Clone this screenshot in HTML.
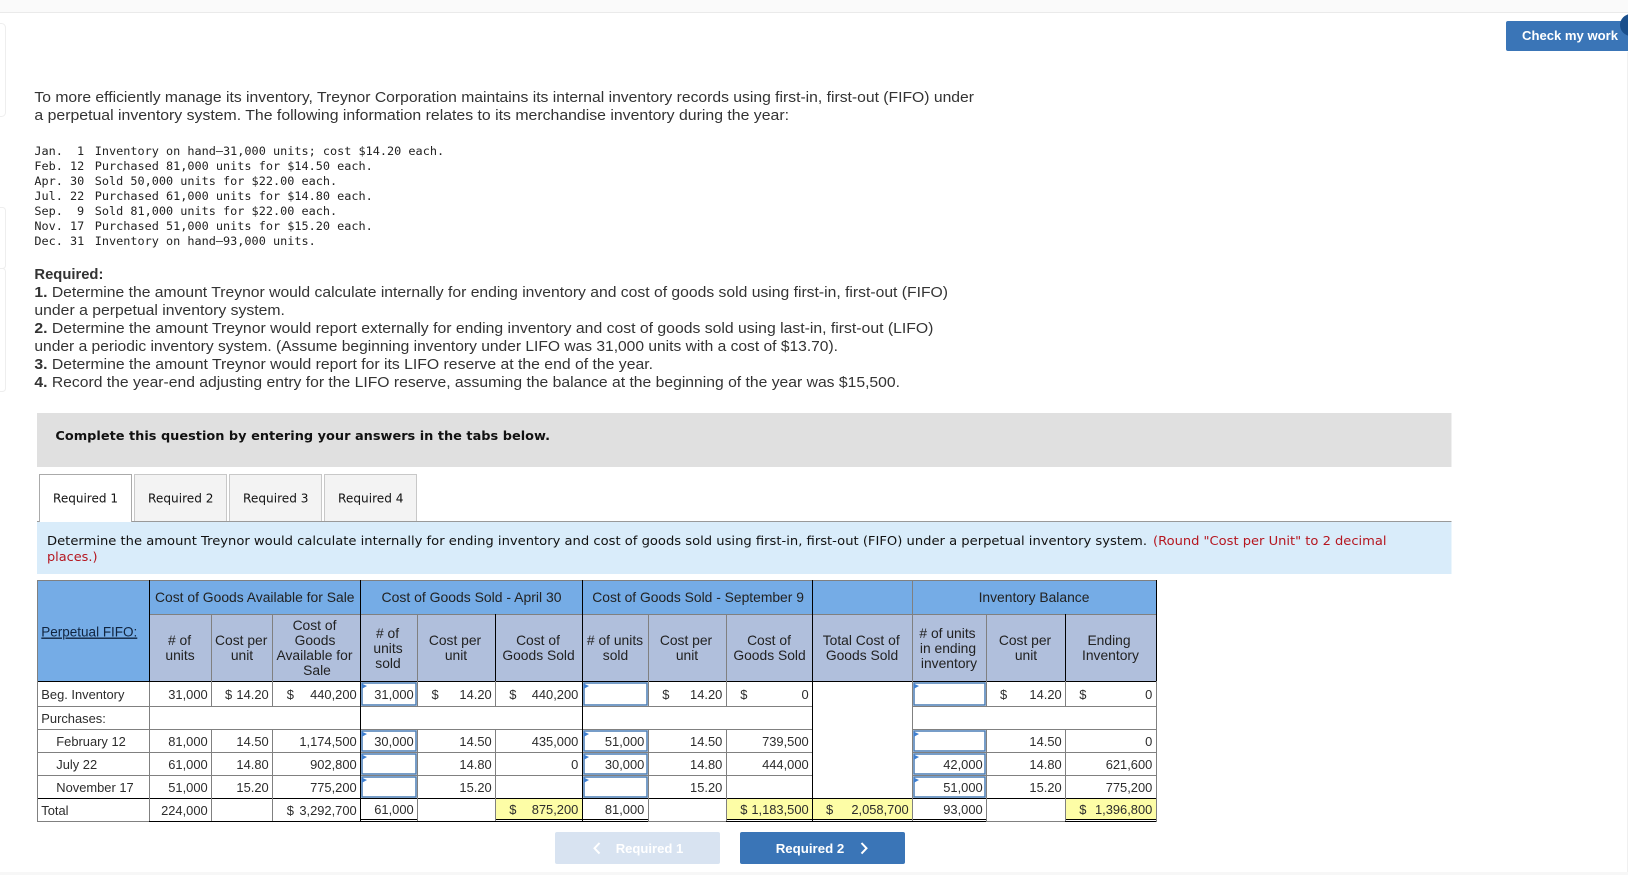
<!DOCTYPE html>
<html lang="en">
<head>
<meta charset="utf-8">
<title>Treynor Corporation</title>
<style>
html,body{margin:0;padding:0;background:#fff;width:1628px;height:875px;overflow:hidden}
svg{display:block;position:absolute;left:0;top:0}
.p{font:15px "Liberation Sans",Arial,sans-serif;fill:#333}
.m{font:11.85px "DejaVu Sans Mono","Liberation Mono",monospace;fill:#222}
.v{font:12px "DejaVu Sans",Verdana,sans-serif;fill:#111}
.h{font:13.85px "Liberation Sans",Arial,sans-serif;fill:#222;text-anchor:middle}
.hl{font:13.85px "Liberation Sans",Arial,sans-serif;fill:#222}
.b{font:12.9px "Liberation Sans",Arial,sans-serif;fill:#2c2c2c}
.r{font:12.9px "Liberation Sans",Arial,sans-serif;fill:#2c2c2c;text-anchor:end}
.g{fill:#808080}.k{fill:#000}
.in{fill:#fff;stroke:#4a7db6;stroke-width:1.5}
.fl{fill:#3f7fd0}
</style>
</head>
<body>
<svg width="1628" height="875" viewBox="0 0 1628 875" xmlns="http://www.w3.org/2000/svg">
<!-- chrome -->
<rect x="0" y="0" width="1628" height="12" fill="#fafafa"/>
<rect x="0" y="12" width="1628" height="1" fill="#eaeaea"/>
<rect x="0" y="872" width="1628" height="3" fill="#f7f7f7"/>
<rect x="-10" y="23.5" width="15.5" height="93" rx="4" fill="#fff" stroke="#eee"/>
<rect x="-10" y="207.5" width="15.5" height="61" rx="3" fill="#fff" stroke="#eee"/>
<rect x="-10" y="268.5" width="15.5" height="123" rx="3" fill="#fff" stroke="#eee"/>
<rect x="1627" y="52" width="1" height="820" fill="#f0f0f0"/>
<!-- check my work -->
<rect x="1506" y="21" width="130" height="30" rx="2" fill="#3a75b7"/>
<circle cx="1631" cy="25" r="11" fill="#1a4f8c"/>
<text x="1522" y="40" textLength="96" lengthAdjust="spacingAndGlyphs" style="font:bold 13.2px 'Liberation Sans',Arial,sans-serif;fill:#fff">Check my work</text>

<!-- prose -->
<text class="p" x="34.4" y="102" textLength="939.6" lengthAdjust="spacingAndGlyphs">To more efficiently manage its inventory, Treynor Corporation maintains its internal inventory records using first-in, first-out (FIFO) under</text>
<text class="p" x="34.4" y="120" textLength="754.6" lengthAdjust="spacingAndGlyphs">a perpetual inventory system. The following information relates to its merchandise inventory during the year:</text>

<text class="m" x="34.4" y="155">Jan.</text><text class="m" x="77" y="155">1</text><text class="m" x="94.7" y="155">Inventory on hand—31,000 units; cost $14.20 each.</text>
<text class="m" x="34.4" y="170">Feb.</text><text class="m" x="70" y="170">12</text><text class="m" x="94.7" y="170">Purchased 81,000 units for $14.50 each.</text>
<text class="m" x="34.4" y="185">Apr.</text><text class="m" x="70" y="185">30</text><text class="m" x="94.7" y="185">Sold 50,000 units for $22.00 each.</text>
<text class="m" x="34.4" y="200">Jul.</text><text class="m" x="70" y="200">22</text><text class="m" x="94.7" y="200">Purchased 61,000 units for $14.80 each.</text>
<text class="m" x="34.4" y="215">Sep.</text><text class="m" x="77" y="215">9</text><text class="m" x="94.7" y="215">Sold 81,000 units for $22.00 each.</text>
<text class="m" x="34.4" y="230">Nov.</text><text class="m" x="70" y="230">17</text><text class="m" x="94.7" y="230">Purchased 51,000 units for $15.20 each.</text>
<text class="m" x="34.4" y="245">Dec.</text><text class="m" x="70" y="245">31</text><text class="m" x="94.7" y="245">Inventory on hand—93,000 units.</text>

<text class="p" x="34.4" y="279" style="font-weight:bold" textLength="69" lengthAdjust="spacingAndGlyphs">Required:</text>
<text class="p" x="34.4" y="297" textLength="913.6" lengthAdjust="spacingAndGlyphs"><tspan font-weight="bold">1.</tspan> Determine the amount Treynor would calculate internally for ending inventory and cost of goods sold using first-in, first-out (FIFO)</text>
<text class="p" x="34.4" y="315" textLength="250.5" lengthAdjust="spacingAndGlyphs">under a perpetual inventory system.</text>
<text class="p" x="34.4" y="333" textLength="899" lengthAdjust="spacingAndGlyphs"><tspan font-weight="bold">2.</tspan> Determine the amount Treynor would report externally for ending inventory and cost of goods sold using last-in, first-out (LIFO)</text>
<text class="p" x="34.4" y="351" textLength="803.6" lengthAdjust="spacingAndGlyphs">under a periodic inventory system. (Assume beginning inventory under LIFO was 31,000 units with a cost of $13.70).</text>
<text class="p" x="34.4" y="369" textLength="618.6" lengthAdjust="spacingAndGlyphs"><tspan font-weight="bold">3.</tspan> Determine the amount Treynor would report for its LIFO reserve at the end of the year.</text>
<text class="p" x="34.4" y="387" textLength="865.6" lengthAdjust="spacingAndGlyphs"><tspan font-weight="bold">4.</tspan> Record the year-end adjusting entry for the LIFO reserve, assuming the balance at the beginning of the year was $15,500.</text>

<!-- grey box -->
<rect x="37" y="413" width="1414.5" height="54" fill="#e0e0e0"/>
<text x="55.4" y="440" textLength="494.6" lengthAdjust="spacingAndGlyphs" style="font:bold 12.5px 'DejaVu Sans',Verdana,sans-serif;fill:#111">Complete this question by entering your answers in the tabs below.</text>

<!-- tabs -->
<rect x="134.5" y="474.5" width="92" height="47" fill="#f3f3f3" stroke="#c8c8c8"/>
<rect x="229.5" y="474.5" width="92" height="47" fill="#f3f3f3" stroke="#c8c8c8"/>
<rect x="324.5" y="474.5" width="92" height="47" fill="#f3f3f3" stroke="#c8c8c8"/>
<rect x="37" y="521" width="1414.5" height="1" fill="#999"/>
<rect x="39.5" y="474.5" width="92" height="48" fill="#fff" stroke="#aaa"/>
<text class="v" x="53" y="502.5" textLength="65" lengthAdjust="spacingAndGlyphs">Required 1</text>
<text class="v" x="148" y="502.5" textLength="65.5" lengthAdjust="spacingAndGlyphs">Required 2</text>
<text class="v" x="243" y="502.5" textLength="65.5" lengthAdjust="spacingAndGlyphs">Required 3</text>
<text class="v" x="338" y="502.5" textLength="65.5" lengthAdjust="spacingAndGlyphs">Required 4</text>

<!-- instruction box -->
<rect x="37" y="522" width="1414.5" height="52" fill="#d9ecfa"/>
<text class="v" x="47" y="545" textLength="1100" lengthAdjust="spacingAndGlyphs">Determine the amount Treynor would calculate internally for ending inventory and cost of goods sold using first-in, first-out (FIFO) under a perpetual inventory system.</text>
<text class="v" x="1153" y="545" textLength="233.5" lengthAdjust="spacingAndGlyphs" style="fill:#b5161f">(Round "Cost per Unit" to 2 decimal</text>
<text class="v" x="47" y="561" textLength="50.5" lengthAdjust="spacingAndGlyphs" style="fill:#b5161f">places.)</text>

<!-- table fills -->
<rect x="37" y="580" width="1120" height="34" fill="#75ace6"/>
<rect x="37" y="614" width="113" height="67" fill="#75ace6"/>
<rect x="150" y="614" width="1007" height="67" fill="#b0bfdc"/>
<rect x="495" y="799" width="88" height="20" fill="#fdfda6"/>
<rect x="726" y="799" width="187" height="20" fill="#fdfda6"/>
<rect x="1065" y="799" width="92" height="20" fill="#fdfda6"/>

<!-- horizontals -->
<rect class="g" x="37" y="580" width="1120" height="1"/>
<rect class="g" x="149" y="614" width="1008" height="1"/>
<rect class="k" x="37" y="681" width="1120" height="1"/>
<rect class="g" x="37" y="706" width="776" height="1"/><rect class="g" x="912" y="706" width="245" height="1"/>
<rect class="g" x="37" y="729" width="776" height="1"/><rect class="g" x="912" y="729" width="245" height="1"/>
<rect class="g" x="37" y="752" width="776" height="1"/><rect class="g" x="912" y="752" width="245" height="1"/>
<rect class="g" x="37" y="775" width="776" height="1"/><rect class="g" x="912" y="775" width="245" height="1"/>
<rect class="k" x="37" y="798" width="1120" height="1"/>
<rect class="g" x="37" y="821" width="112" height="1"/>
<rect class="k" x="149" y="821" width="499" height="1"/>
<rect class="g" x="648" y="821" width="78" height="1"/>
<rect class="k" x="726" y="821" width="260" height="1"/>
<rect class="g" x="986" y="821" width="79" height="1"/>
<rect class="k" x="1065" y="821" width="92" height="1"/>
<rect class="k" x="360" y="819" width="57" height="1"/>
<rect class="k" x="495" y="819" width="153" height="1"/>
<rect class="k" x="726" y="819" width="260" height="1"/>
<rect class="k" x="1065" y="819" width="92" height="1"/>

<!-- verticals -->
<rect class="g" x="37" y="580" width="1" height="242"/>
<rect class="k" x="149" y="580" width="1" height="102"/><rect class="g" x="149" y="682" width="1" height="139"/>
<rect class="g" x="211" y="614" width="1" height="92"/><rect class="g" x="211" y="729" width="1" height="92"/>
<rect class="g" x="272" y="614" width="1" height="92"/><rect class="g" x="272" y="729" width="1" height="92"/>
<rect class="k" x="360" y="580" width="1" height="241"/>
<rect class="g" x="417" y="614" width="1" height="92"/><rect class="g" x="417" y="729" width="1" height="92"/>
<rect class="k" x="495" y="614" width="1" height="67"/><rect class="g" x="495" y="681" width="1" height="25"/><rect class="g" x="495" y="729" width="1" height="92"/>
<rect class="k" x="582" y="580" width="1" height="241"/>
<rect class="g" x="648" y="614" width="1" height="92"/><rect class="g" x="648" y="729" width="1" height="92"/>
<rect class="g" x="726" y="614" width="1" height="92"/><rect class="g" x="726" y="729" width="1" height="92"/>
<rect class="k" x="812" y="580" width="1" height="241"/>
<rect class="g" x="912" y="580" width="1" height="241"/>
<rect class="g" x="986" y="614" width="1" height="92"/><rect class="g" x="986" y="729" width="1" height="92"/>
<rect class="k" x="1065" y="614" width="1" height="67"/><rect class="g" x="1065" y="681" width="1" height="25"/><rect class="g" x="1065" y="729" width="1" height="92"/>
<rect class="k" x="1156" y="580" width="1" height="101"/><rect class="g" x="1156" y="681" width="1" height="141"/>

<!-- inputs -->
<rect class="in" x="362" y="683" width="54" height="22"/><polygon class="fl" points="361.5,683.5 367,686 361.5,689"/>
<rect class="in" x="362" y="731" width="54" height="20"/><polygon class="fl" points="361.5,731.5 367,734 361.5,737"/>
<rect class="in" x="362" y="754" width="54" height="20"/><polygon class="fl" points="361.5,754.5 367,757 361.5,760"/>
<rect class="in" x="362" y="777" width="54" height="20"/><polygon class="fl" points="361.5,777.5 367,780 361.5,783"/>
<rect class="in" x="584" y="683" width="63" height="22"/><polygon class="fl" points="583.5,683.5 589,686 583.5,689"/>
<rect class="in" x="584" y="731" width="63" height="20"/><polygon class="fl" points="583.5,731.5 589,734 583.5,737"/>
<rect class="in" x="584" y="754" width="63" height="20"/><polygon class="fl" points="583.5,754.5 589,757 583.5,760"/>
<rect class="in" x="584" y="777" width="63" height="20"/><polygon class="fl" points="583.5,777.5 589,780 583.5,783"/>
<rect class="in" x="914" y="683" width="71" height="22"/><polygon class="fl" points="913.5,683.5 919,686 913.5,689"/>
<rect class="in" x="914" y="731" width="71" height="20"/><polygon class="fl" points="913.5,731.5 919,734 913.5,737"/>
<rect class="in" x="914" y="754" width="71" height="20"/><polygon class="fl" points="913.5,754.5 919,757 913.5,760"/>
<rect class="in" x="914" y="777" width="71" height="20"/><polygon class="fl" points="913.5,777.5 919,780 913.5,783"/>

<!-- header text -->
<text class="hl" x="155" y="602" textLength="199.5" lengthAdjust="spacingAndGlyphs">Cost of Goods Available for Sale</text>
<text class="hl" x="381.5" y="602" textLength="180" lengthAdjust="spacingAndGlyphs">Cost of Goods Sold - April 30</text>
<text class="hl" x="592.3" y="602">Cost of Goods Sold - September 9</text>
<text class="h" x="1034" y="602">Inventory Balance</text>
<text class="hl" x="41.3" y="636.5" text-decoration="underline" style="fill:#10243f" textLength="96" lengthAdjust="spacingAndGlyphs">Perpetual FIFO:</text>

<text class="h" x="179.5" y="645"># of</text><text class="h" x="180" y="660">units</text>
<text class="h" x="241.2" y="645">Cost per</text><text class="h" x="242" y="660">unit</text>
<text class="h" x="314.5" y="630">Cost of</text><text class="h" x="315" y="645">Goods</text><text class="h" x="314.5" y="660">Available for</text><text class="h" x="317" y="675">Sale</text>
<text class="h" x="387.5" y="638"># of</text><text class="h" x="388" y="653">units</text><text class="h" x="388" y="668">sold</text>
<text class="h" x="455" y="645">Cost per</text><text class="h" x="456" y="660">unit</text>
<text class="h" x="538" y="645">Cost of</text><text class="h" x="538.5" y="660">Goods Sold</text>
<text class="h" x="615" y="645"># of units</text><text class="h" x="615.5" y="660">sold</text>
<text class="h" x="686" y="645">Cost per</text><text class="h" x="687" y="660">unit</text>
<text class="h" x="769" y="645">Cost of</text><text class="h" x="769.5" y="660">Goods Sold</text>
<text class="h" x="861.2" y="645">Total Cost of</text><text class="h" x="862" y="660">Goods Sold</text>
<text class="h" x="947.5" y="638"># of units</text><text class="h" x="948" y="653">in ending</text><text class="h" x="949" y="668">inventory</text>
<text class="h" x="1025" y="645">Cost per</text><text class="h" x="1026" y="660">unit</text>
<text class="h" x="1109" y="645">Ending</text><text class="h" x="1110.5" y="660">Inventory</text>

<!-- row labels -->
<text class="b" x="41.3" y="699">Beg. Inventory</text>
<text class="b" x="41.3" y="723">Purchases:</text>
<text class="b" x="56.3" y="746">February 12</text>
<text class="b" x="56.3" y="769">July 22</text>
<text class="b" x="56.3" y="792">November 17</text>
<text class="b" x="41.3" y="815">Total</text>

<!-- row 1 -->
<text class="r" x="207.7" y="699">31,000</text>
<text class="b" x="225" y="699">$</text><text class="r" x="268.7" y="699">14.20</text>
<text class="b" x="286.7" y="699">$</text><text class="r" x="356.7" y="699">440,200</text>
<text class="r" x="413.7" y="699">31,000</text>
<text class="b" x="431.5" y="699">$</text><text class="r" x="491.7" y="699">14.20</text>
<text class="b" x="509.3" y="699">$</text><text class="r" x="578.3" y="699">440,200</text>
<text class="b" x="662.3" y="699">$</text><text class="r" x="722.3" y="699">14.20</text>
<text class="b" x="740.3" y="699">$</text><text class="r" x="808.7" y="699">0</text>
<text class="b" x="1000" y="699">$</text><text class="r" x="1061.7" y="699">14.20</text>
<text class="b" x="1079.3" y="699">$</text><text class="r" x="1152.3" y="699">0</text>

<!-- Feb -->
<text class="r" x="207.7" y="746">81,000</text><text class="r" x="268.7" y="746">14.50</text><text class="r" x="356.7" y="746">1,174,500</text>
<text class="r" x="413.7" y="746">30,000</text><text class="r" x="491.7" y="746">14.50</text><text class="r" x="578.3" y="746">435,000</text>
<text class="r" x="644.3" y="746">51,000</text><text class="r" x="722.3" y="746">14.50</text><text class="r" x="808.7" y="746">739,500</text>
<text class="r" x="1061.7" y="746">14.50</text><text class="r" x="1152.3" y="746">0</text>
<!-- Jul -->
<text class="r" x="207.7" y="769">61,000</text><text class="r" x="268.7" y="769">14.80</text><text class="r" x="356.7" y="769">902,800</text>
<text class="r" x="491.7" y="769">14.80</text><text class="r" x="578.3" y="769">0</text>
<text class="r" x="644.3" y="769">30,000</text><text class="r" x="722.3" y="769">14.80</text><text class="r" x="808.7" y="769">444,000</text>
<text class="r" x="982.7" y="769">42,000</text><text class="r" x="1061.7" y="769">14.80</text><text class="r" x="1152.3" y="769">621,600</text>
<!-- Nov -->
<text class="r" x="207.7" y="792">51,000</text><text class="r" x="268.7" y="792">15.20</text><text class="r" x="356.7" y="792">775,200</text>
<text class="r" x="491.7" y="792">15.20</text>
<text class="r" x="722.3" y="792">15.20</text>
<text class="r" x="982.7" y="792">51,000</text><text class="r" x="1061.7" y="792">15.20</text><text class="r" x="1152.3" y="792">775,200</text>
<!-- Total -->
<text class="r" x="207.7" y="815">224,000</text>
<text class="b" x="286.7" y="815">$</text><text class="r" x="356.7" y="815">3,292,700</text>
<text class="r" x="413.7" y="814">61,000</text>
<text class="b" x="509.3" y="814">$</text><text class="r" x="578.3" y="814">875,200</text>
<text class="r" x="644.3" y="814">81,000</text>
<text class="b" x="740.3" y="814">$</text><text class="r" x="808.7" y="814">1,183,500</text>
<text class="b" x="826" y="814">$</text><text class="r" x="908.7" y="814">2,058,700</text>
<text class="r" x="982.7" y="814">93,000</text>
<text class="b" x="1079.3" y="814">$</text><text class="r" x="1152.3" y="814">1,396,800</text>

<!-- nav buttons -->
<rect x="555" y="832" width="165" height="32" rx="2" fill="#d8e3f1"/>
<path d="M599.5 843 L594.5 848.3 L599.5 853.6" fill="none" stroke="#fff" stroke-width="2"/>
<text x="615.7" y="853" textLength="67.6" lengthAdjust="spacingAndGlyphs" style="font:bold 13.3px 'Liberation Sans',Arial,sans-serif;fill:#fff">Required 1</text>
<rect x="740" y="832" width="165" height="32" rx="2" fill="#3a75b7"/>
<text x="775.7" y="853" textLength="68.6" lengthAdjust="spacingAndGlyphs" style="font:bold 13.3px 'Liberation Sans',Arial,sans-serif;fill:#fff">Required 2</text>
<path d="M861.5 843 L866.5 848.3 L861.5 853.6" fill="none" stroke="#fff" stroke-width="2"/>
</svg>
</body>
</html>
